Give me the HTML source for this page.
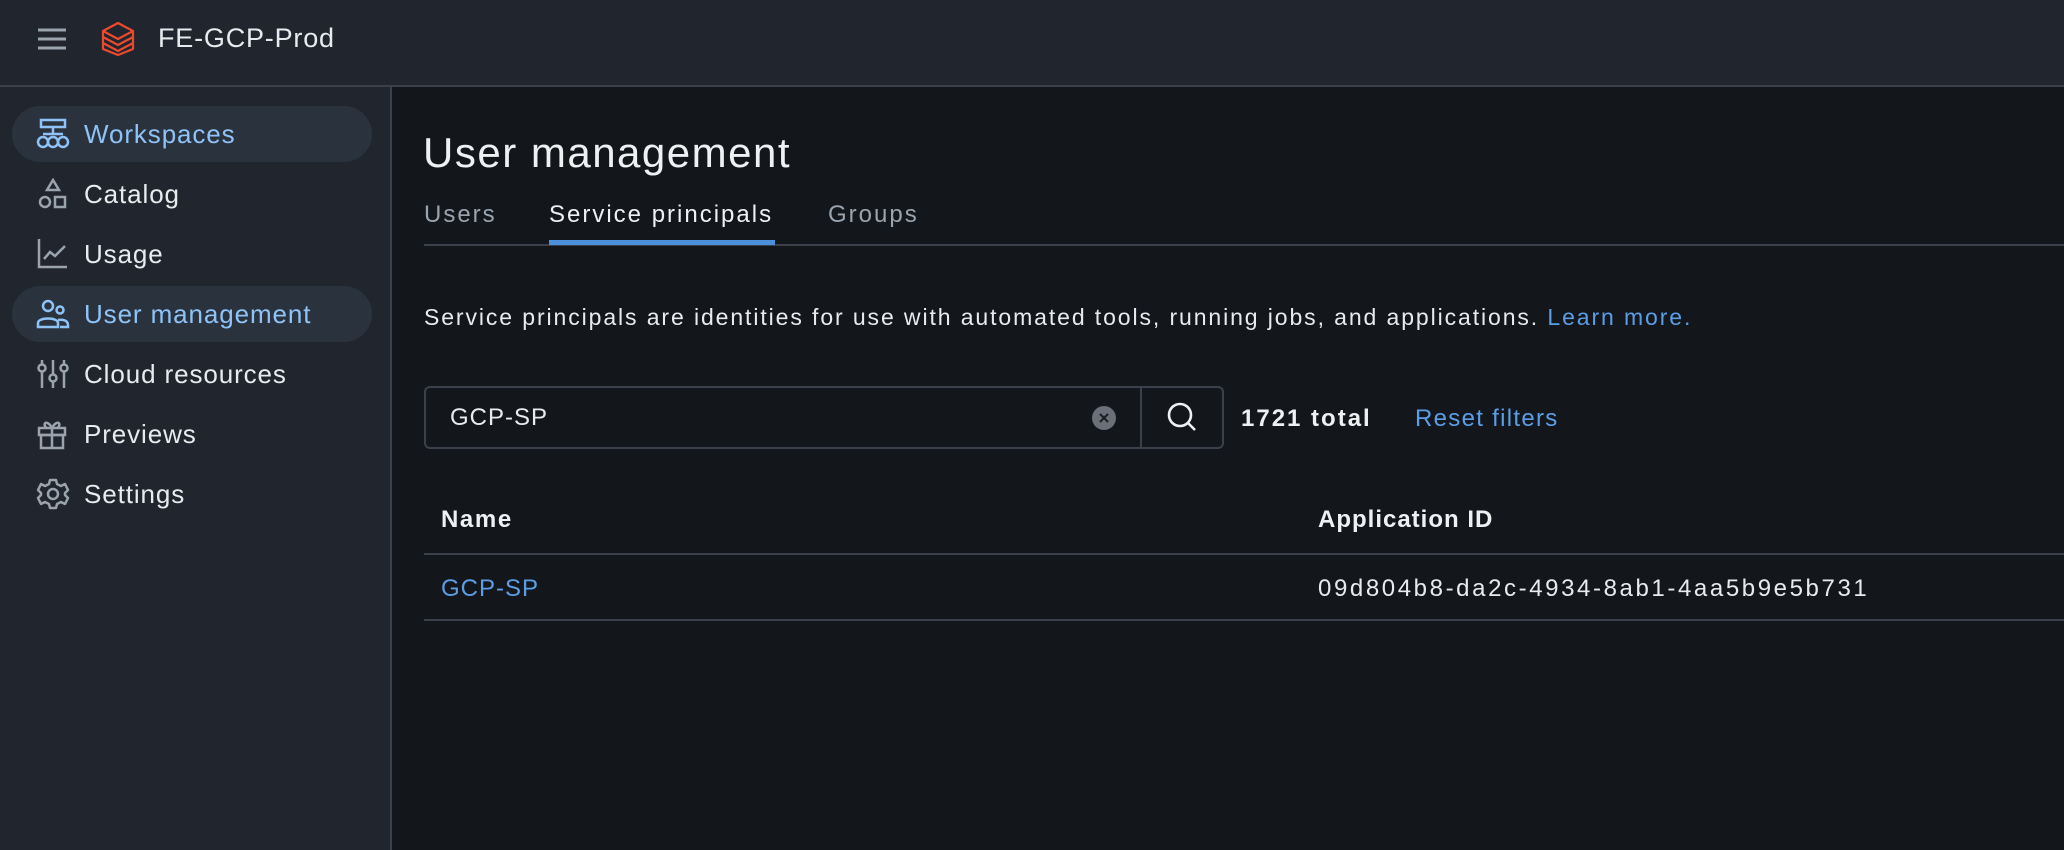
<!DOCTYPE html>
<html><head><meta charset="utf-8"><style>
*{margin:0;padding:0;box-sizing:border-box}
body{width:2064px;height:850px;background:#13171c;font-family:"Liberation Sans",sans-serif;color:#e8ebee;position:relative;overflow:hidden}
.hdr{position:absolute;left:0;top:0;width:2064px;height:87px;background:#21252d;border-bottom:2px solid #3a414b}
.side{position:absolute;left:0;top:87px;width:392px;height:763px;background:#21252d;border-right:2px solid #3a414b}
.abs{position:absolute;white-space:nowrap}
.item{position:absolute;left:12px;width:360px;height:56px;border-radius:28px}
.item.act{background:#2a333d}
.item svg{position:absolute;left:24px;top:12px}
.item span{position:absolute;left:72px;top:13px;font-size:26px;color:#e8ebee;letter-spacing:0.9px}
.item.act span{color:#8fc3f7}
.line{position:absolute;left:424px;right:0;height:2px;background:#3a414b}
</style></head><body>
<div class="hdr">
<svg class="abs" style="left:37px;top:27px" width="30" height="24"><g stroke="#9aa4ae" stroke-width="3"><line x1="1" y1="3" x2="29" y2="3"/><line x1="1" y1="12" x2="29" y2="12"/><line x1="1" y1="21" x2="29" y2="21"/></g></svg>
<svg class="abs" style="left:101px;top:22px" width="34" height="34" viewBox="0 0 34 34"><g fill="none" stroke="#ec4a2e" stroke-width="2.2" stroke-linejoin="round"><path d="M17 1 L32 9 L17 17 L2 9 Z"/><path d="M2 15 L17 23 L32 15"/><path d="M2 21 L17 29 L32 21"/><path d="M2 9 L2 27 L17 33 L32 27 L32 9"/></g></svg>
<div class="abs" style="left:158px;top:23px;font-size:27px;color:#e8ebee;letter-spacing:0.8px">FE-GCP-Prod</div>
</div>
<div class="side">
<div class="item act" style="top:19px"><svg width="34" height="32" viewBox="0 0 34 32" fill="none" stroke="#8fc3f7" stroke-width="2.5"><rect x="5" y="2" width="24" height="7"/><line x1="17" y1="9" x2="17" y2="16"/><line x1="7" y1="16" x2="27" y2="16"/><circle cx="7" cy="24" r="5"/><circle cx="17" cy="24" r="5"/><circle cx="27" cy="24" r="5"/></svg><span>Workspaces</span></div>
<div class="item" style="top:79px"><svg width="34" height="32" viewBox="0 0 34 32" fill="none" stroke="#9aa4ae" stroke-width="2.5"><path d="M17 2 L23 12 L11 12 Z"/><circle cx="9" cy="24" r="5"/><rect x="19" y="19" width="10" height="10"/></svg><span>Catalog</span></div>
<div class="item" style="top:139px"><svg width="34" height="32" viewBox="0 0 34 32" fill="none" stroke="#9aa4ae" stroke-width="2.5"><path d="M3 1 V29 H31"/><path d="M8 21 L14 14 L19 18 L29 8"/></svg><span>Usage</span></div>
<div class="item act" style="top:199px"><svg width="34" height="32" viewBox="0 0 34 32" fill="none" stroke="#8fc3f7" stroke-width="2.5"><circle cx="12" cy="8" r="5"/><circle cx="24" cy="12" r="3.5"/><path d="M2 29 V25 C2 19 22 19 22 25 V29 Z"/><path d="M22 22 C28 21 32 23 32 27 V29 H24"/></svg><span>User management</span></div>
<div class="item" style="top:259px"><svg width="34" height="32" viewBox="0 0 34 32" fill="none" stroke="#9aa4ae" stroke-width="2.5"><line x1="6" y1="2" x2="6" y2="30"/><line x1="17" y1="2" x2="17" y2="30"/><line x1="28" y1="2" x2="28" y2="30"/><circle cx="6" cy="10" r="3.5" fill="#21252d"/><circle cx="17" cy="20" r="3.5" fill="#21252d"/><circle cx="28" cy="10" r="3.5" fill="#21252d"/></svg><span>Cloud resources</span></div>
<div class="item" style="top:319px"><svg width="34" height="32" viewBox="0 0 34 32" fill="none" stroke="#9aa4ae" stroke-width="2.5"><rect x="3" y="10" width="26" height="7"/><rect x="5" y="17" width="22" height="13"/><line x1="16" y1="10" x2="16" y2="30"/><path d="M16 10 C12 2 6 4 10 10 M16 10 C20 2 26 4 22 10"/></svg><span>Previews</span></div>
<div class="item" style="top:379px"><svg width="34" height="32" viewBox="0 0 34 32" fill="none" stroke="#9aa4ae" stroke-width="2.5"><path d="M14 2 H20 L21 6 L25 8 L29 6 L32 12 L29 15 V17 L32 20 L29 26 L25 24 L21 26 L20 30 H14 L13 26 L9 24 L5 26 L2 20 L5 17 V15 L2 12 L5 6 L9 8 L13 6 Z" stroke-linejoin="round"/><circle cx="17" cy="16" r="5"/></svg><span>Settings</span></div>
</div>
<div class="abs" style="left:423px;top:129px;font-size:42px;font-weight:500;color:#eef0f2;letter-spacing:1.5px">User management</div>
<div class="abs" style="left:424px;top:201px;font-size:24px;color:#9aa4ae;letter-spacing:2px">Users</div>
<div class="abs" style="left:549px;top:201px;font-size:24px;color:#eef0f2;letter-spacing:2px">Service principals</div>
<div class="abs" style="left:828px;top:201px;font-size:24px;color:#9aa4ae;letter-spacing:2px">Groups</div>
<div class="line" style="top:244px"></div>
<div class="abs" style="left:549px;top:240px;width:226px;height:5px;background:#4c8fdc"></div>
<div class="abs" style="left:424px;top:304px;font-size:23px;color:#e8ebee;letter-spacing:1.9px">Service principals are identities for use with automated tools, running jobs, and applications. <span style="color:#5c9ee6">Learn more.</span></div>
<div class="abs" style="left:424px;top:386px;width:800px;height:63px;border:2px solid #3a414b;border-radius:6px"></div>
<div class="abs" style="left:1140px;top:387px;width:2px;height:61px;background:#3a414b"></div>
<div class="abs" style="left:450px;top:404px;font-size:24px;color:#e8ebee;letter-spacing:1px">GCP-SP</div>
<svg class="abs" style="left:1092px;top:406px" width="24" height="24"><circle cx="12" cy="12" r="12" fill="#6b7078"/><path d="M8 8 L16 16 M16 8 L8 16" stroke="#1a1d22" stroke-width="2"/></svg>
<svg class="abs" style="left:1166px;top:402px" width="32" height="32" fill="none" stroke="#eef0f2" stroke-width="2.6"><circle cx="14" cy="13" r="11"/><line x1="22" y1="21" x2="29" y2="28"/></svg>
<div class="abs" style="left:1241px;top:405px;font-size:24px;font-weight:bold;color:#eef0f2;letter-spacing:2px">1721 total</div>
<div class="abs" style="left:1415px;top:405px;font-size:24px;color:#5c9ee6;letter-spacing:1.3px">Reset filters</div>
<div class="abs" style="left:441px;top:506px;font-size:24px;font-weight:bold;color:#eef0f2;letter-spacing:1.6px">Name</div>
<div class="abs" style="left:1318px;top:506px;font-size:24px;font-weight:bold;color:#eef0f2;letter-spacing:1px">Application ID</div>
<div class="line" style="top:553px"></div>
<div class="abs" style="left:441px;top:575px;font-size:24px;color:#5c9ee6;letter-spacing:1px">GCP-SP</div>
<div class="abs" style="left:1318px;top:575px;font-size:24px;color:#e8ebee;letter-spacing:2.6px">09d804b8-da2c-4934-8ab1-4aa5b9e5b731</div>
<div class="line" style="top:619px"></div>
</body></html>
